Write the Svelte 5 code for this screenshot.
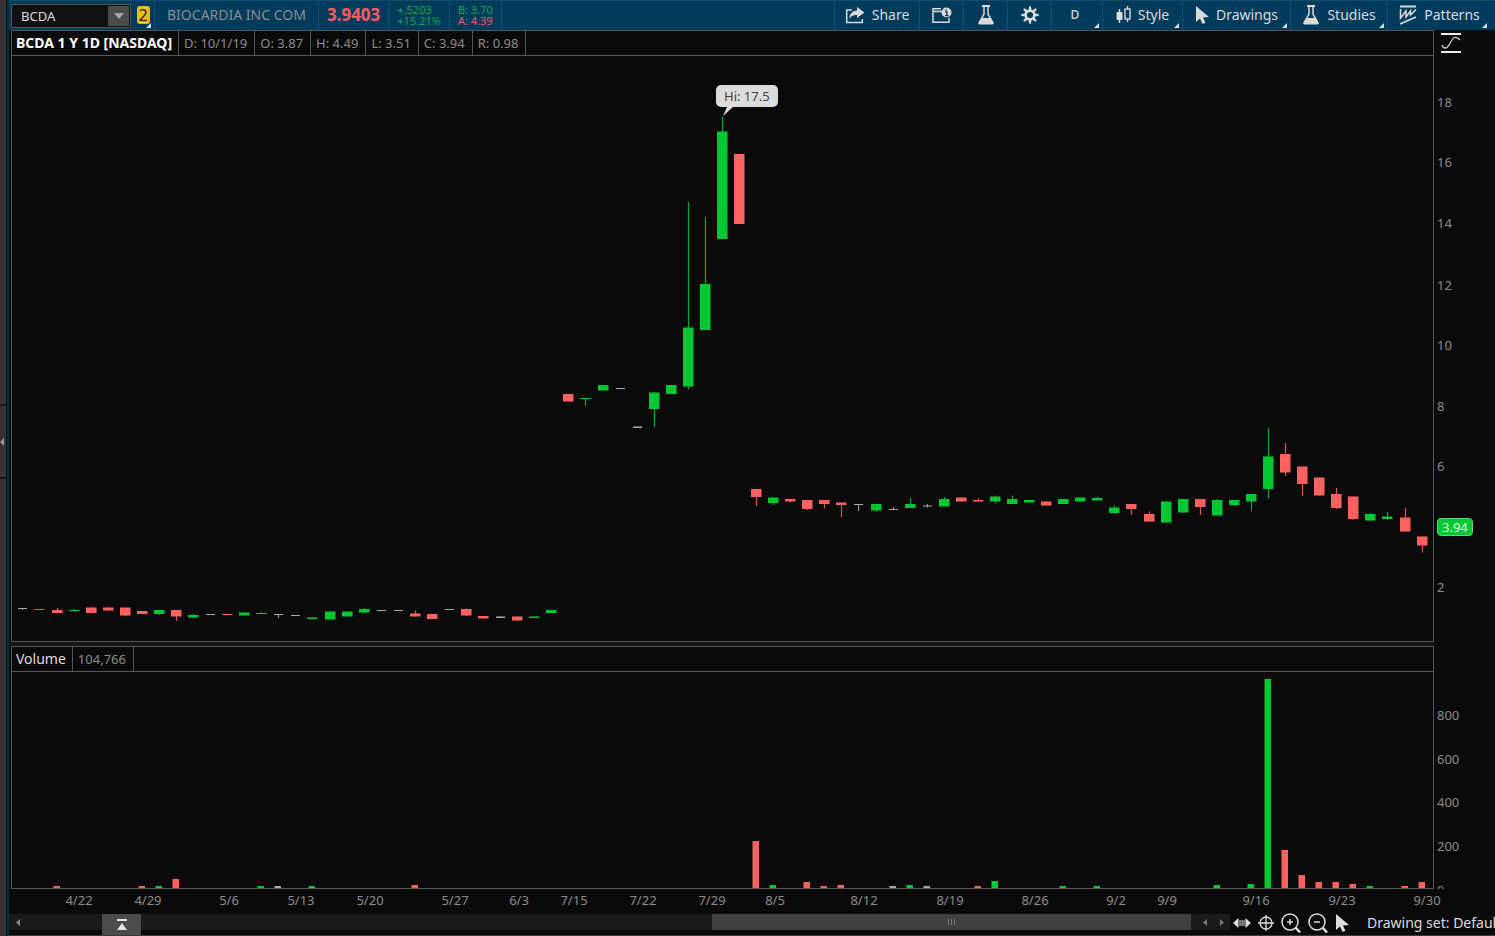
<script lang="ts">
  type Dir = 'up' | 'down' | 'flat';
  // session, direction, high, body top, body bottom, low (plot units)
  type Candle = [number, Dir, number, number, number, number];

  // Plot coordinate system shared by the price and volume panes.
  const LEFT = 12;
  const WIDTH = 1421;
  const PRICE_TOP = 56;
  const PRICE_H = 585;
  const VOL_H = 216;
  const sx = (i: number) => Math.round(22.4 + i * 17.063);
  const pctX = (x: number) => ((x - LEFT) / WIDTH) * 100;
  const pctPrice = (y: number) => ((y - 30) / 612) * 100;
  const pctVol = (y: number) => ((y - 646) / 243) * 100;

  const candles: Candle[] = [
    [0, 'flat', 608, 608, 609, 610],
    [1, 'up', 609, 609, 610, 610],
    [2, 'down', 608, 610, 613, 613],
    [3, 'up', 609, 610, 611, 612],
    [4, 'down', 607.5, 607.5, 613, 613],
    [5, 'down', 607.5, 607.5, 610.5, 610.5],
    [6, 'down', 607.5, 607.5, 615.5, 616],
    [7, 'down', 611, 611, 614, 614],
    [8, 'up', 610, 610, 614, 615],
    [9, 'down', 610, 610, 616.5, 621],
    [10, 'up', 614, 615, 617.5, 618],
    [11, 'flat', 614, 614, 615, 615],
    [12, 'down', 614, 614, 615, 615],
    [13, 'up', 612.5, 612.5, 615.5, 615.5],
    [14, 'up', 612, 613, 614, 614],
    [15, 'flat', 614, 614, 615, 618],
    [16, 'flat', 615, 615, 616, 616],
    [17, 'up', 617.5, 617.5, 619, 619],
    [18, 'up', 611.5, 611.5, 619.5, 619.5],
    [19, 'up', 611.5, 611.5, 616.5, 616.5],
    [20, 'up', 608, 609, 612.5, 613],
    [21, 'flat', 610, 610, 611, 611],
    [22, 'flat', 610, 610, 611, 611],
    [23, 'down', 610.5, 613.5, 616.5, 616.5],
    [24, 'down', 614, 614, 619, 619],
    [25, 'flat', 609, 609, 610, 610],
    [26, 'down', 608.5, 609, 615.5, 616],
    [27, 'down', 616, 616, 618.5, 618.5],
    [28, 'flat', 616.5, 616.5, 618, 618],
    [29, 'down', 616.5, 616.5, 620.5, 620.5],
    [30, 'up', 616.5, 616.5, 618, 618],
    [31, 'up', 610, 610, 613, 613],
    [32, 'down', 394, 394, 401.5, 401.5],
    [33, 'up', 398, 398, 399, 406],
    [34, 'up', 385, 385, 390.5, 390.5],
    [35, 'flat', 388, 388, 389, 389],
    [36, 'flat', 426.5, 426.5, 428, 428],
    [37, 'up', 392, 392.5, 409, 427],
    [38, 'up', 385, 385, 394, 394],
    [39, 'up', 202, 327.5, 386.5, 389.5],
    [40, 'up', 217, 284, 330, 330],
    [41, 'up', 117, 131.5, 239, 239],
    [42, 'down', 154, 154, 224, 224],
    [43, 'down', 489, 489, 497, 506],
    [44, 'up', 497.5, 497.5, 503, 505],
    [45, 'down', 499, 499, 501.5, 502.5],
    [46, 'down', 500, 500, 509, 510],
    [47, 'down', 500, 500, 504, 508.5],
    [48, 'down', 502.5, 502.5, 505, 517],
    [49, 'flat', 504, 504, 505, 511],
    [50, 'up', 504, 504, 510.5, 512],
    [51, 'flat', 507, 509, 510, 510],
    [52, 'up', 498, 504, 508, 508],
    [53, 'flat', 504, 505.5, 506.5, 507.5],
    [54, 'up', 497, 499, 506.5, 506.5],
    [55, 'down', 497.5, 497.5, 501.5, 501.5],
    [56, 'down', 498, 500, 501.5, 501.5],
    [57, 'up', 495.5, 496.5, 501.5, 503.5],
    [58, 'up', 495.5, 499, 504, 504],
    [59, 'up', 500, 500, 502.5, 502.5],
    [60, 'down', 501.5, 501.5, 505.5, 505.5],
    [61, 'up', 499, 499, 504, 504],
    [62, 'up', 497.5, 497.5, 501.5, 501.5],
    [63, 'up', 496.5, 498, 500.5, 500.5],
    [64, 'up', 505.5, 507.5, 513, 514],
    [65, 'down', 504, 504, 509, 515],
    [66, 'down', 511.5, 514, 521.5, 521.5],
    [67, 'up', 501.5, 501.5, 522.5, 522.5],
    [68, 'up', 499, 499, 512.5, 512.5],
    [69, 'down', 499, 499, 507, 515],
    [70, 'up', 499, 500, 515.5, 515.5],
    [71, 'up', 500, 500, 505, 506],
    [72, 'up', 494, 494, 501.5, 511],
    [73, 'up', 428, 456.5, 489, 498.5],
    [74, 'down', 443, 454, 472.5, 476],
    [75, 'down', 466.5, 466.5, 484, 496],
    [76, 'down', 477.5, 477.5, 495.5, 495.5],
    [77, 'down', 488, 494, 508, 509],
    [78, 'down', 496.5, 496.5, 519, 520],
    [79, 'up', 513, 514, 520.5, 520.5],
    [80, 'up', 512, 516.5, 519, 520],
    [81, 'down', 508, 517.5, 531.5, 531.5],
    [82, 'down', 536.5, 536.5, 545.5, 552.5]
  ];

  // session, bar height
  const volumes: [number, number][] = [
    [2, 2], [7, 2], [8, 2], [9, 9], [14, 2], [15, 2], [17, 2], [23, 3],
    [43, 47], [44, 3], [46, 6], [47, 2], [48, 3], [51, 2], [52, 3], [53, 2],
    [56, 2], [57, 7], [61, 2], [63, 2], [70, 3], [72, 4], [73, 209], [74, 38],
    [75, 13], [76, 6], [77, 6], [78, 4], [79, 2], [81, 2], [82, 6]
  ];

  const priceTicks = [
    [18, 102], [16, 162], [14, 223], [12, 285], [10, 345], [8, 406], [6, 466], [2, 587]
  ];
  const volumeTicks = [[800, 715], [600, 759], [400, 802], [200, 846], [0, 890]];
  const dates: [string, number][] = [
    ['4/22', 79], ['4/29', 148], ['5/6', 229], ['5/13', 301], ['5/20', 370],
    ['5/27', 455], ['6/3', 519], ['7/15', 574], ['7/22', 643], ['7/29', 712],
    ['8/5', 775], ['8/12', 864], ['8/19', 950], ['8/26', 1035], ['9/2', 1116],
    ['9/9', 1167], ['9/16', 1256], ['9/23', 1342], ['9/30', 1427]
  ];
  const stats = ['D: 10/1/19', 'O: 3.87', 'H: 4.49', 'L: 3.51', 'C: 3.94', 'R: 0.98'];

  let symbol = $state('BCDA');
</script>

{#snippet flask()}
  <svg width="18" height="20" viewBox="0 0 18 20" aria-hidden="true">
    <path d="M5 1h8" stroke="currentColor" stroke-width="2" />
    <path d="M7 1v8L2.500 17h13L11 9V1" fill="none" stroke="currentColor" stroke-width="1.500" />
    <path d="M5 13h8l3.500 4.500q.8 2-1 2h-13q-1.800 0-1-2z" fill="currentColor" />
  </svg>
{/snippet}

{#snippet pointer()}
  <svg width="14" height="19" viewBox="0 0 14 19" aria-hidden="true">
    <path d="M1 0v16l4-3.500 2.600 5.500 2.800-1.200-2.400-5.300L14 11z" fill="currentColor" />
  </svg>
{/snippet}

<div class="app">
  <aside class="rail">
    <div class="rail-part tall"></div>
    <button class="rail-part handle" aria-label="Expand sidebar">
      <svg width="4" height="8" viewBox="0 0 4 8"><path d="M4 0v8L0 4z" fill="#999" /></svg>
    </button>
    <div class="rail-part rest"></div>
  </aside>

  <main>
    <header class="toolbar">
      <div class="symbol">
        <input aria-label="Symbol" bind:value={symbol} />
        <button aria-label="Symbol list">
          <svg width="10" height="6" viewBox="0 0 10 6"><path d="M0 0h10L5 6z" fill="#a5a5a5" /></svg>
        </button>
      </div>
      <button class="link corner" aria-label="Link color 2"><span>2</span></button>
      <span class="company">BIOCARDIA INC COM</span>
      <strong class="last">3.9403</strong>
      <div class="pair"><span class="green">+.5203</span><span class="green">+15.21%</span></div>
      <div class="pair"><span class="green">B: 3.70</span><span class="red">A: 4.39</span></div>

      <nav class="tools">
        <button class="share">
          <svg width="20" height="17" viewBox="0 0 20 17" aria-hidden="true">
            <path d="M7 3H1.700v12.500h15.600V12" fill="none" stroke="currentColor" stroke-width="1.500" />
            <path d="M12 0l7.500 5.500L12 11V8Q7 7.500 4 12 4.500 4 12 3.500z" fill="currentColor" />
          </svg>
          Share
        </button>
        <button class="icon" aria-label="Symbol info">
          <svg width="20" height="17" viewBox="0 0 20 17" aria-hidden="true">
            <path d="M10 4.500H1M17 11v4.300H1V1.700h8" fill="none" stroke="currentColor" stroke-width="1.500" />
            <circle cx="14.500" cy="5.500" r="5" fill="currentColor" />
            <path d="M13.300 5h1.600v3.500M13 8.600h3.400M14.200 2.300v1.400" stroke="#013b5c" stroke-width="1.300" fill="none" />
          </svg>
        </button>
        <button class="icon" aria-label="Edit studies">{@render flask()}</button>
        <button class="icon" aria-label="Settings">
          <svg width="18" height="18" viewBox="-9 -9 18 18" aria-hidden="true">
            {#each [0, 45, 90, 135, 180, 225, 270, 315] as a (a)}
              <path d="M-1.700-4.500L-.8-8.800H.8L1.700-4.500z" fill="currentColor" transform={`rotate(${a})`} />
            {/each}
            <circle r="4.300" fill="none" stroke="currentColor" stroke-width="2.400" />
          </svg>
        </button>
        <button class="period corner">D</button>
        <button class="style corner">
          <svg width="15" height="18" viewBox="0 0 15 18" aria-hidden="true">
            <path d="M3.500 3v14M11.500 0v3M11.500 13v3" stroke="currentColor" stroke-width="1.400" />
            <rect x="0.500" y="6" width="6" height="8" rx="1" fill="currentColor" />
            <rect x="9" y="3" width="5" height="10" fill="none" stroke="currentColor" stroke-width="1.400" />
          </svg>
          Style
        </button>
        <button class="drawings corner">{@render pointer()}Drawings</button>
        <button class="studies corner">{@render flask()}Studies</button>
        <button class="patterns corner">
          <svg width="18" height="20" viewBox="0 0 18 20" aria-hidden="true">
            <path d="M1 1.500h16M1 19L17 12" stroke="currentColor" stroke-width="1.800" />
            <path d="M1.500 4v9L7 6v6l4.500-6v4L17 4.500" fill="none" stroke="currentColor" stroke-width="1.500" />
          </svg>
          Patterns
        </button>
      </nav>
    </header>

    <section class="pane price">
      <div class="frame">
        <div class="info">
          <b>BCDA 1 Y 1D [NASDAQ]</b>
          {#each stats as s (s)}<span>{s}</span>{/each}
        </div>
        <div class="plot">
          <svg viewBox={`${LEFT} ${PRICE_TOP} ${WIDTH} ${PRICE_H}`} preserveAspectRatio="none" aria-label="Price candles">
            {#each candles as [i, dir, hi, top, bottom, lo] (i)}
              <g class={dir}>
                <rect class="wick" x={sx(i) - 0.1} y={hi} width="1.200" height={lo - hi} />
                <rect
                  x={sx(i) - (dir === 'flat' ? 4 : 5)}
                  y={top}
                  width={dir === 'flat' ? 9 : 10.5}
                  height={bottom - top}
                />
              </g>
            {/each}
          </svg>
          <div class="callout" style:left={`${pctX(716)}%`} style:top={`${((85 - PRICE_TOP) / PRICE_H) * 100}%`}>
            Hi: 17.5
            <svg width="10" height="9" viewBox="0 0 10 9" aria-hidden="true"><path d="M4 0h6L0 9z" fill="#dcdcdc" /></svg>
          </div>
        </div>
      </div>
      <div class="axis">
        <button class="fit" aria-label="Fit scale">
          <svg width="20" height="20" viewBox="0 0 20 20" aria-hidden="true">
            <path d="M0 1h20M0 19h20" stroke="#eee" stroke-width="2" />
            <path d="M1 12c1 4 5 4 7 0l3-5c2-4 5-3 8 0" fill="none" stroke="#ccc" stroke-width="1.300" />
          </svg>
        </button>
        {#each priceTicks as [v, y] (v)}
          <span class="tick" style:top={`${pctPrice(y)}%`}>{v}</span>
        {/each}
        <span class="tag" style:top={`${pctPrice(527)}%`}>3.94</span>
      </div>
    </section>

    <div class="splitter"></div>

    <section class="pane volume">
      <div class="frame">
        <div class="info"><span class="name">Volume</span><span>104,766</span></div>
        <div class="plot">
          <svg viewBox={`${LEFT} 0 ${WIDTH} ${VOL_H}`} preserveAspectRatio="none" aria-label="Volume bars">
            {#each volumes as [i, h] (i)}
              <rect class={candles[i][1]} x={sx(i) - 3.5} y={VOL_H - h} width="6.500" height={h} />
            {/each}
          </svg>
        </div>
      </div>
      <div class="axis">
        {#each volumeTicks as [v, y] (v)}
          <span class="tick" style:top={`${pctVol(y)}%`}>{v}</span>
        {/each}
      </div>
    </section>

    <div class="dates">
      <div class="scale">
        {#each dates as [label, x] (label)}
          <span style:left={`${pctX(x)}%`}>{label}</span>
        {/each}
      </div>
    </div>

    <footer>
      <div class="scroll">
        <button class="arrow" aria-label="Scroll to start">
          <svg width="4" height="7" viewBox="0 0 4 7"><path d="M4 0v7L0 3.500z" fill="#8a8a8a" /></svg>
        </button>
        <button class="raise" aria-label="Show gadgets">
          <svg width="12" height="12" viewBox="0 0 12 12"><path d="M1 0h10v2H1zM6 4l5 7H1z" fill="#e4e4e4" /></svg>
        </button>
        <div class="track">
          <div class="thumb"><i></i><i></i><i></i></div>
        </div>
        <button class="arrow" aria-label="Scroll left">
          <svg width="4" height="7" viewBox="0 0 4 7"><path d="M4 0v7L0 3.500z" fill="#777" /></svg>
        </button>
        <button class="arrow" aria-label="Scroll right">
          <svg width="4" height="7" viewBox="0 0 4 7"><path d="M0 0v7L4 3.500z" fill="#777" /></svg>
        </button>
      </div>
      <div class="modes">
        <button aria-label="Expand time">
          <svg width="18" height="12" viewBox="0 0 18 12">
            <path d="M5.500 1v10L0 6zM12.500 1v10L18 6z" fill="currentColor" />
            <path d="M7 3v6M9 3v6M11 3v6" stroke="currentColor" />
          </svg>
        </button>
        <button aria-label="Crosshair">
          <svg width="16" height="16" viewBox="0 0 16 16" fill="none" stroke="currentColor" stroke-width="1.300">
            <circle cx="8" cy="8" r="6" /><path d="M8 0v16M0 8h16" />
          </svg>
        </button>
        <button aria-label="Zoom in">
          <svg width="20" height="20" viewBox="0 0 20 20" fill="none" stroke="currentColor" stroke-width="1.500">
            <circle cx="9" cy="9" r="8" /><path d="M9 6v6M6 9h6" /><path d="M14.500 14.500L19 19.500" stroke-width="2.400" />
          </svg>
        </button>
        <button aria-label="Zoom out">
          <svg width="20" height="20" viewBox="0 0 20 20" fill="none" stroke="currentColor" stroke-width="1.500">
            <circle cx="9" cy="9" r="8" /><path d="M6 9h6" /><path d="M14.500 14.500L19 19.500" stroke-width="2.400" />
          </svg>
        </button>
        <button aria-label="Pointer">{@render pointer()}</button>
      </div>
      <button class="set">Drawing set: Default</button>
    </footer>
  </main>
</div>

<style>
  :global(body) {
    background: #0a0a0a;
  }
  .app {
    display: flex;
    height: 100vh;
    overflow: hidden;
    background: #0a0a0a;
    color: #8c8c8c;
    font: 13px/18px 'Noto Sans', 'Open Sans', sans-serif;
  }
  button {
    display: flex;
    align-items: center;
    justify-content: center;
    padding: 0;
    border: 0;
    background: none;
    color: inherit;
    font: inherit;
  }
  svg {
    display: block;
    flex: none;
  }

  .rail {
    display: flex;
    flex-direction: column;
    width: 6px;
    border-right: 1px solid #111;
  }
  .rail-part {
    background: #333;
  }
  .tall {
    flex: 406;
  }
  .handle {
    flex: 71;
    justify-content: flex-start;
    border: solid #161616;
    border-width: 2px 0;
  }
  .rest {
    flex: 459;
  }

  main {
    display: flex;
    flex: 1;
    flex-direction: column;
    min-width: 0;
    border-left: 2px solid #032c43;
    border-bottom: 1px solid #3a3a3a;
  }

  .toolbar {
    display: flex;
    flex: none;
    height: 30px;
    background: #013b5c;
    box-shadow: inset 0 1px #124a69;
    font-size: 14px;
  }
  .symbol {
    display: flex;
    width: 120px;
    height: 24px;
    margin: 4px 0 0 2px;
    padding: 1px;
    box-sizing: border-box;
    border: 1px solid #555;
    border-radius: 2px;
    background: #111;
  }
  .symbol input {
    flex: 1;
    min-width: 0;
    padding: 0 8px;
    border: 0;
    outline: 0;
    background: none;
    color: #ddd;
    font: inherit;
    font-size: 13px;
  }
  .symbol button {
    width: 21px;
    background: #4b4b4b;
  }
  .corner {
    position: relative;
  }
  .corner::after {
    content: '';
    position: absolute;
    right: 3px;
    bottom: 2px;
    border: solid transparent;
    border-width: 0 0 5px 5px;
    border-bottom-color: #ddd;
  }
  .link {
    width: 23px;
    padding-left: 1px;
  }
  .link span {
    width: 13px;
    height: 18px;
    border-radius: 3px;
    background: #e8bf08;
    color: #222;
    font-size: 16px;
    line-height: 18px;
  }
  .company,
  .last,
  .pair {
    display: flex;
    align-items: center;
    padding: 0 8px;
    border-right: 1px solid #174d6d;
  }
  .company {
    padding: 0 12px;
    border-left: 1px solid #174d6d;
  }
  .last {
    color: #ff5c60;
    font-size: 17px;
  }
  .pair {
    flex-direction: column;
    align-items: flex-start;
    justify-content: center;
    font-size: 11px;
    line-height: 11px;
  }
  .green {
    color: #0ca84a;
  }
  .red {
    color: #e35b66;
  }
  .tools {
    display: flex;
    margin-left: auto;
    color: #dadada;
  }
  .tools button {
    gap: 7px;
    box-sizing: border-box;
    border-left: 1px solid #174d6d;
  }
  .share {
    width: 85px;
  }
  .icon {
    width: 44px;
  }
  .tools .period {
    width: 51px;
    padding-right: 4px;
    font-size: 12px;
    font-weight: 500;
  }
  .tools .style {
    width: 80px;
  }
  .tools .drawings {
    width: 108px;
  }
  .tools .studies {
    width: 97px;
  }
  .tools .patterns {
    width: 108px;
    padding-right: 4px;
  }
  .patterns::after {
    right: 8px;
  }

  .pane {
    display: flex;
    min-height: 0;
    padding-left: 2px;
  }
  .price {
    flex: 612 0 0;
  }
  .volume {
    flex: 243 0 0;
    overflow: hidden;
  }
  .splitter {
    flex: none;
    height: 4px;
    margin-right: 61px;
    background: #151515;
  }
  .frame {
    display: flex;
    flex: 1;
    flex-direction: column;
    min-width: 0;
    border: 1px solid #555;
  }
  .info {
    display: flex;
    flex: none;
    height: 24px;
    border-bottom: 1px solid #555;
    line-height: 24px;
  }
  .info > * {
    padding: 0 7px 0 5px;
    border-right: 1px solid #555;
  }
  .info b,
  .info .name {
    padding: 0 6px 0 4px;
    font-size: 14px;
  }
  .info b {
    color: #fff;
  }
  .info .name {
    color: #ddd;
  }
  .plot {
    position: relative;
    flex: 1;
    min-height: 0;
  }
  .plot > svg {
    position: absolute;
    width: 100%;
    height: 100%;
  }
  .up {
    fill: #00c832;
  }
  .down {
    fill: #ff6060;
  }
  .flat {
    fill: #aaa;
  }
  .wick {
    opacity: 0.85;
  }
  .callout {
    position: absolute;
    padding: 2px 8px;
    border-radius: 5px;
    background: #dcdcdc;
    color: #444;
  }
  .callout svg {
    position: absolute;
    top: 100%;
    left: 7px;
  }

  .axis {
    position: relative;
    flex: none;
    width: 61px;
  }
  .fit {
    margin: 3px 0 0 7px;
  }
  .tick,
  .tag {
    position: absolute;
    left: 3px;
    transform: translateY(-50%);
  }
  .tag {
    padding: 0 4px;
    border: 1px solid #57d873;
    border-radius: 4px;
    background: #00c832;
    color: #e4f5e6;
    line-height: 16px;
  }

  .dates {
    flex: none;
    height: 25px;
    padding: 0 62px 0 3px;
  }
  .scale {
    position: relative;
  }
  .scale span {
    position: absolute;
    top: 2px;
    transform: translateX(-50%);
  }

  footer {
    display: flex;
    flex: none;
    height: 21px;
  }
  .scroll {
    display: flex;
    flex: 1;
    min-width: 0;
    height: 16px;
    background: #1a1a1a;
  }
  .arrow {
    width: 17px;
  }
  .raise {
    width: 39px;
    height: 21px;
    margin-left: 76px;
    background: #4b4b4b;
  }
  .track {
    flex: 1;
    display: flex;
    padding-right: 5px;
  }
  .thumb {
    display: flex;
    align-items: center;
    justify-content: center;
    gap: 2px;
    width: 45.6%;
    margin-left: auto;
    background: #404040;
  }
  .thumb i {
    width: 1px;
    height: 6px;
    background: #777;
  }
  .modes {
    display: flex;
    align-items: center;
    gap: 7px;
    height: 18px;
    padding: 0 18px 0 3px;
    color: #ddd;
  }
  .set {
    width: 128px;
    height: 18px;
    justify-content: flex-start;
    overflow: hidden;
    color: #ddd;
    font-size: 14px;
    white-space: nowrap;
  }
</style>
